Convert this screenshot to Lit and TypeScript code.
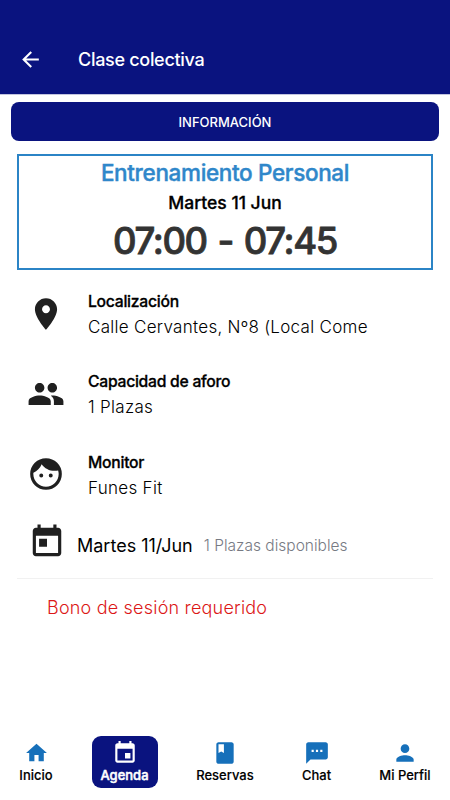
import { LitElement, html, css, svg } from "lit";
import { customElement } from "lit/decorators.js";
import { classMap } from "lit/directives/class-map.js";

const ICONS = {
  back: "M20 11H7.83l5.59-5.59L12 4l-8 8 8 8 1.41-1.41L7.83 13H20v-2z",
  place:
    "M12 2C8.13 2 5 5.13 5 9c0 5.25 7 13 7 13s7-7.75 7-13c0-3.87-3.13-7-7-7zm0 9.5c-1.38 0-2.5-1.12-2.5-2.5s1.12-2.5 2.5-2.5 2.5 1.12 2.5 2.5-1.12 2.5-2.5 2.5z",
  people:
    "M16 11c1.66 0 2.99-1.34 2.99-3S17.66 5 16 5c-1.66 0-3 1.34-3 3s1.34 3 3 3zm-8 0c1.66 0 2.99-1.34 2.99-3S9.66 5 8 5C6.34 5 5 6.34 5 8s1.34 3 3 3zm0 2c-2.33 0-7 1.17-7 3.5V19h14v-2.5c0-2.33-4.67-3.5-7-3.5zm8 0c-.29 0-.62.02-.97.05 1.16.84 1.97 1.97 1.97 3.45V19h6v-2.5c0-2.33-4.67-3.5-7-3.5z",
  face: "M9 11.75A1.25 1.25 0 0 0 7.75 13 1.25 1.25 0 0 0 9 14.25 1.25 1.25 0 0 0 10.25 13 1.25 1.25 0 0 0 9 11.75M15 11.75A1.25 1.25 0 0 0 13.75 13 1.25 1.25 0 0 0 15 14.25 1.25 1.25 0 0 0 16.25 13 1.25 1.25 0 0 0 15 11.75M12 2A10 10 0 0 0 2 12 10 10 0 0 0 12 22 10 10 0 0 0 22 12 10 10 0 0 0 12 2M12 20C7.59 20 4 16.41 4 12 4 11.71 4 11.42 4.05 11.14 6.41 10.09 8.28 8.16 9.26 5.77 11.07 8.33 14.05 10 17.42 10 18.2 10 18.95 9.91 19.67 9.74 19.88 10.45 20 11.21 20 12 20 16.41 16.41 20 12 20Z",
  today:
    "M19 3h-1V1h-2v2H8V1H6v2H5c-1.11 0-1.99.9-1.99 2L3 19c0 1.1.89 2 2 2h14c1.1 0 2-.9 2-2V5c0-1.1-.9-2-2-2zm0 16H5V8h14v11zM7 10h5v5H7z",
  home: "M10 20v-6h4v6h5v-8h3L12 3 2 12h3v8z",
  event:
    "M17 12h-5v5h5v-5zM16 1v2H8V1H6v2H5c-1.11 0-1.99.9-1.99 2L3 19c0 1.1.89 2 2 2h14c1.1 0 2-.9 2-2V5c0-1.1-.9-2-2-2h-1V1h-2zm3 18H5V8h14v11z",
  book: "M18 2H6c-1.1 0-2 .9-2 2v16c0 1.1.9 2 2 2h12c1.1 0 2-.9 2-2V4c0-1.1-.9-2-2-2zM6 4h5v8l-2.5-1.5L6 12V4z",
  chat: "M20 2H4c-1.1 0-1.99.9-1.99 2L2 22l4-4h14c1.1 0 2-.9 2-2V4c0-1.1-.9-2-2-2zM9 11H7V9h2v2zm4 0h-2V9h2v2zm4 0h-2V9h2v2z",
  person:
    "M12 12c2.21 0 4-1.79 4-4s-1.79-4-4-4-4 1.79-4 4 1.79 4 4 4zm0 2c-2.67 0-8 1.34-8 4v2h16v-2c0-2.66-5.33-4-8-4z",
};
type IconName = keyof typeof ICONS;

const icon = (name: IconName) =>
  html`<svg class="icon" viewBox="0 0 24 24" aria-hidden="true">${svg`<path d=${ICONS[name]} />`}</svg>`;

const DETAILS: { icon: IconName; title: string; text: string }[] = [
  { icon: "place", title: "Localización", text: "Calle Cervantes, Nº8 (Local Come" },
  { icon: "people", title: "Capacidad de aforo", text: "1 Plazas" },
  { icon: "face", title: "Monitor", text: "Funes Fit" },
];

const TABS: { icon: IconName; cls: string; label: string }[] = [
  { icon: "home", cls: "home", label: "Inicio" },
  { icon: "event", cls: "active", label: "Agenda" },
  { icon: "book", cls: "book", label: "Reservas" },
  { icon: "chat", cls: "chat", label: "Chat" },
  { icon: "person", cls: "profile", label: "Mi Perfil" },
];

@customElement("app-root")
export class AppRoot extends LitElement {
  static styles = css`
    :host {
      display: flex;
      flex-direction: column;
      height: 800px;
      overflow: hidden;
      background: #fff;
      color: #000;
      font-family: Inter, "Liberation Sans", sans-serif;
      white-space: nowrap;
    }
    * {
      box-sizing: border-box;
    }
    .icon {
      display: block;
      flex: none;
      fill: currentColor;
    }
    header {
      display: flex;
      align-items: center;
      gap: 35px;
      height: 94px;
      padding: 24px 0 0 18px;
      background: #0a137f;
      color: #fff;
      box-shadow: 0 1px 0 rgba(10, 19, 127, 0.25);
    }
    header .icon {
      width: 25px;
      height: 25px;
    }
    h1 {
      margin: 0;
      padding-top: 1px;
      font-size: 18px;
      font-weight: 500;
      letter-spacing: -0.3px;
      line-height: 24px;
    }
    .info {
      display: flex;
      align-items: center;
      justify-content: center;
      height: 39px;
      margin: 8px 11px 0;
      border-radius: 8px;
      background: #0a137f;
      color: #fff;
      font-size: 13px;
      font-weight: 500;
    }
    .summary {
      display: flex;
      flex-direction: column;
      align-items: center;
      height: 116px;
      margin: 13px 17px 0;
      padding-top: 2px;
      border: 2px solid #2b84c6;
    }
    .name {
      color: #2f87ca;
      font-size: 22.5px;
      font-weight: 500;
      letter-spacing: -0.35px;
      line-height: 30px;
      -webkit-text-stroke: 0.4px;
    }
    .day {
      font-size: 17.5px;
      font-weight: 500;
      line-height: 30px;
      -webkit-text-stroke: 0.3px;
    }
    .hours {
      color: #333;
      font-size: 36.5px;
      font-weight: 500;
      letter-spacing: -1.4px;
      word-spacing: 2.5px;
      line-height: 46px;
      -webkit-text-stroke: 0.8px;
    }
    .details {
      padding: 19px 0 0 27px;
    }
    .row {
      display: grid;
      grid-template-columns: 38px 1fr;
      column-gap: 23px;
      height: 80.4px;
      align-items: start;
    }
    .row .icon {
      width: 38px;
      height: 38px;
      margin-top: 5.7px;
      color: #202020;
    }
    .label {
      font-size: 15.7px;
      font-weight: 500;
      letter-spacing: -0.26px;
      line-height: 26px;
      -webkit-text-stroke: 0.3px;
    }
    .value {
      font-size: 17px;
      font-weight: 300;
      letter-spacing: 0.29px;
      line-height: 25.5px;
    }
    .slot {
      display: flex;
      align-items: center;
      height: 50px;
      margin: -10.2px 17px 0;
      padding: 0 0 0 11px;
    }
    .slot .icon {
      width: 38px;
      height: 38px;
      margin-top: -6px;
      color: #202020;
    }
    .slot span {
      padding-top: 1px;
    }
    .date {
      margin-left: 11px;
      font-size: 18px;
    }
    .free {
      margin-left: 11px;
      color: #777a83;
      font-size: 15.5px;
      font-weight: 300;
    }
    .rule {
      height: 1px;
      margin: 8px 17px 0;
      background: #f1f1f1;
    }
    .warning {
      margin: 15px 0 0 47px;
      color: #dc1717;
      font-size: 18px;
      font-weight: 300;
      letter-spacing: 0.2px;
      line-height: 28px;
    }
    nav {
      display: grid;
      grid-template-columns: 72px 105px 96px 87px 90px;
      height: 52px;
      margin-top: auto;
      margin-bottom: 12px;
    }
    .tab {
      display: flex;
      flex-direction: column;
      align-items: center;
      justify-self: center;
      width: 66px;
      height: 52px;
      padding-top: 4px;
      border-radius: 9px;
      font-size: 13px;
      font-weight: 500;
      line-height: 18px;
      -webkit-text-stroke: 0.15px;
    }
    .tab .icon {
      width: 26px;
      height: 26px;
      color: #1670ba;
    }
    .tab.home .icon {
      width: 25px;
    }
    .tab.active {
      background: #0a137f;
      color: #fff;
      -webkit-text-stroke: 0.5px;
    }
    .tab.active .icon {
      color: #fff;
    }
  `;

  render() {
    return html`
      <header>${icon("back")}<h1>Clase colectiva</h1></header>
      <div class="info">INFORMACIÓN</div>
      <section class="summary">
        <div class="name">Entrenamiento Personal</div>
        <div class="day">Martes 11 Jun</div>
        <div class="hours">07:00 - 07:45</div>
      </section>
      <section class="details">
        ${DETAILS.map(
          (d) => html`<div class="row">
            ${icon(d.icon)}
            <div>
              <div class="label">${d.title}</div>
              <div class="value">${d.text}</div>
            </div>
          </div>`,
        )}
      </section>
      <div class="slot">
        ${icon("today")}
        <span class="date">Martes 11/Jun</span>
        <span class="free">1 Plazas disponibles</span>
      </div>
      <div class="rule"></div>
      <div class="warning">Bono de sesión requerido</div>
      <nav>
        ${TABS.map(
          (t) => html`<div class=${classMap({ tab: true, [t.cls]: true })}>
            ${icon(t.icon)}<span>${t.label}</span>
          </div>`,
        )}
      </nav>
    `;
  }
}
